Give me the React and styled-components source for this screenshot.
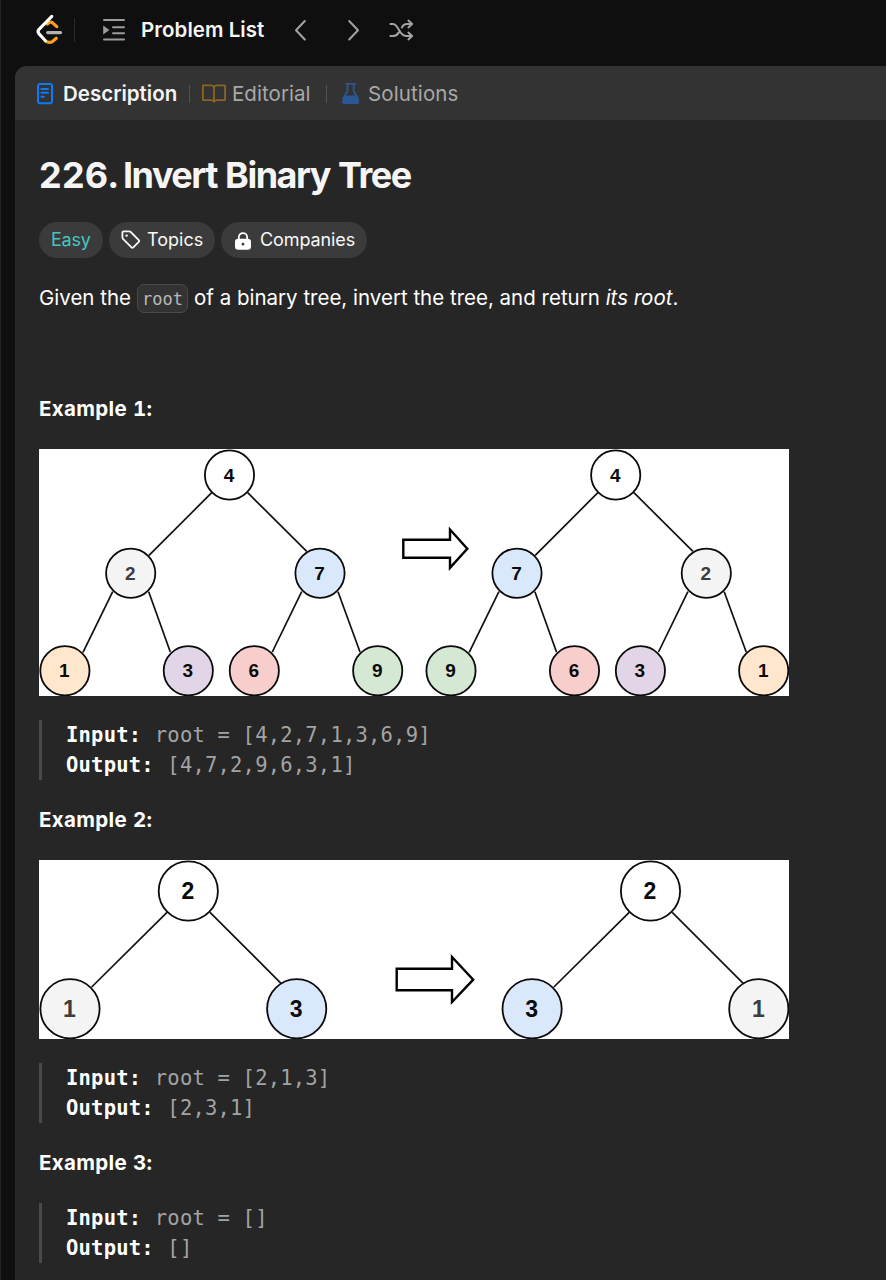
import React from "react";
import styled, { createGlobalStyle } from "styled-components";

const GlobalStyle = createGlobalStyle`
  * { box-sizing: border-box; }
  html, body { margin: 0; background: #0f0f0f; }
  body { font-family: Inter, "Liberation Sans", sans-serif; color: #f5f5f5; }
`;

const Page = styled.div`
  width: 886px;
  height: 1280px;
  overflow: hidden;
  background: #0f0f0f;
  border-left: 1px solid #242424;
  padding-left: 14px;
  display: flex;
  flex-direction: column;
`;

const Header = styled.header`
  height: 66px;
  flex: none;
  display: flex;
  align-items: center;
  padding: 0 0 7px 20px;
  svg { display: block; flex: none; }
`;

const HeaderRule = styled.span`
  width: 1px;
  height: 24px;
  margin: 1px 27px 0 11px;
  background: #292929;
`;

const HeaderTitle = styled.span`
  width: 125px;
  margin: 0 28px 0 15px;
  font-size: 20.5px;
  font-weight: 600;
  letter-spacing: 0.05px;
  line-height: 28px;
  white-space: nowrap;
`;

const NavGroup = styled.div`
  display: flex;
  align-items: center;
  gap: ${(p) => p.$gap}px;
`;

const Panel = styled.main`
  flex: 1;
  background: #262626;
  border-top-left-radius: 12px;
  overflow: hidden;
`;

const TabBar = styled.nav`
  height: 54px;
  display: flex;
  align-items: center;
  padding: 1px 0 0 21px;
  background: #333333;
`;

const Tab = styled.div`
  display: flex;
  align-items: center;
  gap: ${(p) => p.$gap}px;
  width: ${(p) => p.$width}px;
  white-space: nowrap;
  font-size: 20.5px;
  line-height: 28px;
  font-weight: ${(p) => (p.$active ? 600 : 400)};
  letter-spacing: ${(p) => p.$spacing}px;
  color: ${(p) => (p.$active ? "#f5f5f5" : "#a8a8a8")};
  svg { display: block; flex: none; }
`;

const TabRule = styled.span`
  width: 1px;
  height: 18px;
  background: #525252;
  margin: 0 12px;
`;

const Content = styled.article`
  display: flex;
  flex-direction: column;
  align-items: flex-start;
  padding: 31px 24px 0;
`;

const Title = styled.h1`
  display: flex;
  gap: 7px;
  margin: 0;
  font-size: 36px;
  line-height: 48px;
  font-weight: 650;
  letter-spacing: -1.5px;
  word-spacing: 1.2px;
  white-space: nowrap;
`;

const ProblemNumber = styled.span`
  width: 77px;
  letter-spacing: 0.2px;
`;

const Pills = styled.div`
  display: flex;
  gap: 6px;
  margin-top: 23px;
`;

const Pill = styled.span`
  display: flex;
  align-items: center;
  gap: ${(p) => p.$gap || 0}px;
  width: ${(p) => p.$width}px;
  height: 36px;
  padding: 0 0 1px ${(p) => p.$inset || 12}px;
  border-radius: 18px;
  background: #3b3b3b;
  color: ${(p) => p.$color || "#f7f7f7"};
  font-size: 18px;
  letter-spacing: ${(p) => p.$spacing || 0}px;
  white-space: nowrap;
  svg { display: block; flex: none; }
`;

const Statement = styled.p`
  margin: 25px 0 0;
  height: 30px;
  display: flex;
  align-items: center;
  font-size: 20.5px;
  line-height: 30px;
  letter-spacing: 0;
  color: #ffffff;
  white-space: pre;
`;

const InlineCode = styled.code`
  width: 51px;
  height: 29px;
  margin: 1px 6px 0;
  display: flex;
  align-items: center;
  justify-content: center;
  border: 1px solid #4a4a4a;
  border-radius: 7px;
  background: #333333;
  color: #b8b8b8;
  font-family: "DejaVu Sans Mono", monospace;
  font-size: 17px;
  letter-spacing: 0;
`;

const ExampleHeading = styled.h2`
  margin: ${(p) => p.$top}px 0 0;
  font-size: 20.5px;
  line-height: 30px;
  font-weight: 700;
  letter-spacing: 0.35px;
  font-variant-numeric: tabular-nums;
  color: #ffffff;
`;

const Figure = styled.svg`
  display: block;
  margin-top: 25px;
  background: #ffffff;
`;

const NodeLabel = styled.text`
  font-family: "Liberation Sans", Arial, sans-serif;
  font-weight: 700;
  text-anchor: middle;
`;

const Sample = styled.div`
  margin-top: ${(p) => p.$top}px;
  height: 60px;
  padding-left: 24px;
  border-left: 3px solid #4a4a4a;
  color: #a3a3a3;
  font-family: "DejaVu Sans Mono", monospace;
  font-size: 20.5px;
  line-height: 30px;
  letter-spacing: 0.2px;
  white-space: pre;
  strong { color: #ffffff; font-weight: 700; margin-right: 1px; }
`;

const Line = styled.div`
  height: 30px;
`;

const Logo = () => (
  <svg width="28" height="32" viewBox="-0.6 0.2 28 32" fill="none" strokeWidth="3.1" strokeLinecap="round" strokeLinejoin="round">
    <path d="M11.7 10.2 13.4 8.8Q15.2 7.6 17 9L21.2 12.8" stroke="#ffa116" />
    <path d="M9.8 27.2Q13.8 30 17.2 27.4L20.7 24.4" stroke="#ffa116" />
    <path d="M16.2 2.5 3.4 15.5Q1.6 17.6 3.3 19.8L9.8 26.9" stroke="#fff" />
    <path d="M12 18.8H25" stroke="#b3b3b3" />
  </svg>
);

const ListIcon = () => (
  <svg width="24" height="24" viewBox="0 0 24 24" fill="none" stroke="#9b9b9b" strokeWidth="2" strokeLinecap="round">
    <path d="M2 2H22M11 9.2H22M11 15.3H22M2 21.5H22" />
    <path d="M1.2 7.5 7.4 12 1.2 16.5Z" fill="#9b9b9b" stroke="none" />
  </svg>
);

const Chevron = ({ right }) => (
  <svg width="14" height="24" viewBox="0 0 14 24" fill="none" stroke="#a3a3a3" strokeWidth="2" strokeLinecap="round" strokeLinejoin="round">
    <path d={right ? "M2.2 3 11 12.2 2.2 21.5" : "M10.8 3 2 12.2 10.8 21.5"} />
  </svg>
);

const ShuffleIcon = () => (
  <svg width="26" height="24" viewBox="0.6 0 26 24" fill="none" stroke="#a3a3a3" strokeWidth="2" strokeLinecap="round" strokeLinejoin="round">
    <path d="M2 6H4.6C10.3 6 10.5 18 17.5 18H23M2 18H5C7.6 18 9 16.6 10.3 14.6M13.4 9.4C14.6 7.3 16 6 18.3 6H23" />
    <path d="M20 2.6 23.7 6 20 9.4M20 14.6 23.7 18 20 21.4" />
  </svg>
);

const DocIcon = () => (
  <svg width="18" height="22" viewBox="0 0.9 18 22" fill="none" stroke="#0a7bf2" strokeWidth="2" strokeLinecap="round">
    <rect x="2" y="1.9" width="14" height="19.3" rx="2" />
    <path d="M5.4 6.9H12M5.4 10.7H12M5.4 14.7H8" />
  </svg>
);

const BookIcon = () => (
  <svg width="24" height="20" viewBox="0 0.7 24 20" fill="none" stroke="#8c6424" strokeWidth="1.8" strokeLinejoin="round">
    <path d="M12 4Q11.6 2 8.5 2H1Q.9 2 .9 2.5V16.2Q.9 16.8 1.5 16.8H8.5Q11.4 16.8 12 18.5Q12.6 16.8 15.5 16.8H22.5Q23.1 16.8 23.1 16.2V2.5Q23.1 2 22.5 2H15.5Q12.4 2 12 4ZM12 4V18" />
  </svg>
);

const FlaskIcon = () => (
  <svg width="20" height="22" viewBox="-1.5 0.7 20 22">
    <path d="M5.6 1.6H14.6M7 1.8V9L2.7 16M13.2 1.8V9L17.5 16" fill="none" stroke="#2c5593" strokeWidth="1.8" strokeLinecap="round" />
    <path d="M4.5 13.3H15.7L18.6 18Q19.7 21.6 16.5 21.6H3.7Q.5 21.6 1.6 18Z" fill="#2c5593" />
  </svg>
);

const TagIcon = () => (
  <svg width="20" height="20" viewBox="0 0 20 20" fill="none" stroke="#f7f7f7" strokeWidth="1.8" strokeLinejoin="round">
    <path d="M1.4 2.8Q1.4 1.4 2.8 1.4H8.3Q9.1 1.4 9.7 2L17.8 10.1Q18.7 11 17.8 11.9L12.3 17.4Q11.4 18.3 10.5 17.4L2 8.9Q1.4 8.3 1.4 7.5Z" />
    <circle cx="5.6" cy="5.6" r="1.2" fill="#f7f7f7" stroke="none" />
  </svg>
);

const LockIcon = () => (
  <svg width="18" height="20" viewBox="0 -1 18 20">
    <path d="M4.8 9V6.4C4.8 .6 13.2 .6 13.2 6.4V9" fill="none" stroke="#fff" strokeWidth="1.8" />
    <path fillRule="evenodd" d="M4.2 7.7H13.8Q17 7.7 17 10.7V15.4Q17 18.7 13.8 18.7H4.2Q1 18.7 1 15.4V10.7Q1 7.7 4.2 7.7ZM9 11.7A1.4 1.4 0 0 0 9 14.6A1.4 1.4 0 0 0 9 11.7Z" fill="#fff" />
  </svg>
);

const fills = { white: "#ffffff", gray: "#f4f4f4", blue: "#dae8fb", orange: "#ffe6cd", purple: "#e1d5e7", red: "#f8cecd", green: "#d5e8d4" };

const Diagram = ({ height, radius, size, shift, nodes, edges, arrow }) => (
  <Figure width="750" height={height} viewBox={`0 0 750 ${height}`}>
    <g fill="none" stroke="#111" strokeWidth="1.7">
      {[0, shift].map((dx) => edges.map((d) => <path key={d + dx} d={d} transform={`translate(${dx} 0)`} />))}
    </g>
    <polygon points={arrow} fill="#fff" stroke="#000" strokeWidth="2.4" />
    {nodes.map(([value, x, y, tone]) => (
      <g key={x}>
        <circle cx={x} cy={y} r={radius} fill={fills[tone]} stroke="#0b0b0b" strokeWidth="1.8" />
        <NodeLabel x={x - 0.5} y={y + size * 0.35} fontSize={size} fill={tone === "gray" ? "#3d3d3d" : "#0b0b0b"}>{value}</NodeLabel>
      </g>
    ))}
  </Figure>
);

const fullTree = {
  height: 247, radius: 24.6, size: 19, shift: 386.2,
  edges: ["M172.7 43.7 110 106.3", "M208.7 43.7 267.7 102.3", "M73.7 142.7 44 203.3", "M109.7 142.7 131.3 203", "M262.7 142.7 233.3 203", "M299 142.7 321 203"],
  arrow: "364.3,90.7 411,90.7 411,80.5 428.3,99.7 411,118.8 411,108.8 364.3,108.8",
  nodes: [
    [4, 190.5, 26, "white"], [2, 91.7, 124.2, "gray"], [7, 281, 124.2, "blue"],
    [1, 25.9, 221.8, "orange"], [3, 149.3, 221.8, "purple"], [6, 215.3, 221.8, "red"], [9, 338.7, 221.8, "green"],
    [4, 576.7, 26, "white"], [7, 478, 124.2, "blue"], [2, 667.3, 124.2, "gray"],
    [9, 412, 221.8, "green"], [6, 535.5, 221.8, "red"], [3, 601.4, 221.8, "purple"], [1, 724.7, 221.8, "orange"],
  ],
};

const smallTree = {
  height: 179, radius: 29.6, size: 23, shift: 462.2,
  edges: ["M128 52.3 52.7 127", "M171 52.3 242 123.3"],
  arrow: "357.7,108.7 413,108.7 413,97 434.2,119.7 413,142 413,130.3 357.7,130.3",
  nodes: [
    [2, 149.3, 31, "white"], [1, 31, 148.8, "gray"], [3, 257.7, 148.8, "blue"],
    [2, 611.5, 31, "white"], [3, 493.1, 148.8, "blue"], [1, 719.8, 148.8, "gray"],
  ],
};

const IO = ({ input, output, top = 24 }) => (
  <Sample $top={top}>
    <Line><strong>Input:</strong> root = {input}</Line>
    <Line><strong>Output:</strong> {output}</Line>
  </Sample>
);

export default function App() {
  return (
    <>
      <GlobalStyle />
      <Page>
        <Header>
          <Logo />
          <HeaderRule />
          <ListIcon />
          <HeaderTitle>Problem List</HeaderTitle>
          <NavGroup $gap={28}>
            <NavGroup $gap={39}>
              <Chevron />
              <Chevron right />
            </NavGroup>
            <ShuffleIcon />
          </NavGroup>
        </Header>
        <Panel>
          <TabBar>
            <Tab $active $gap={9} $width={141} $spacing={0}><DocIcon />Description</Tab>
            <TabRule />
            <Tab $gap={6} $width={112} $spacing={0.05}><BookIcon />Editorial</Tab>
            <TabRule />
            <Tab $gap={9} $width={122} $spacing={0.12}><FlaskIcon />Solutions</Tab>
          </TabBar>
          <Content>
            <Title><ProblemNumber>226.</ProblemNumber><span>Invert Binary Tree</span></Title>
            <Pills>
              <Pill $width={64} $color="#46c6c2" $spacing={-0.2}>Easy</Pill>
              <Pill $width={106} $gap={6}><TagIcon />Topics</Pill>
              <Pill $width={146} $gap={8} $inset={13} $spacing={-0.1}><LockIcon />Companies</Pill>
            </Pills>
            <Statement>Given the<InlineCode>root</InlineCode>of a binary tree, invert the tree, and return <em>its root</em>.</Statement>
            <ExampleHeading $top={81}>Example 1:</ExampleHeading>
            <Diagram {...fullTree} />
            <IO input="[4,2,7,1,3,6,9]" output="[4,7,2,9,6,3,1]" />
            <ExampleHeading $top={25}>Example 2:</ExampleHeading>
            <Diagram {...smallTree} />
            <IO input="[2,1,3]" output="[2,3,1]" />
            <ExampleHeading $top={25}>Example 3:</ExampleHeading>
            <IO input="[]" output="[]" top={25} />
          </Content>
        </Panel>
      </Page>
    </>
  );
}
